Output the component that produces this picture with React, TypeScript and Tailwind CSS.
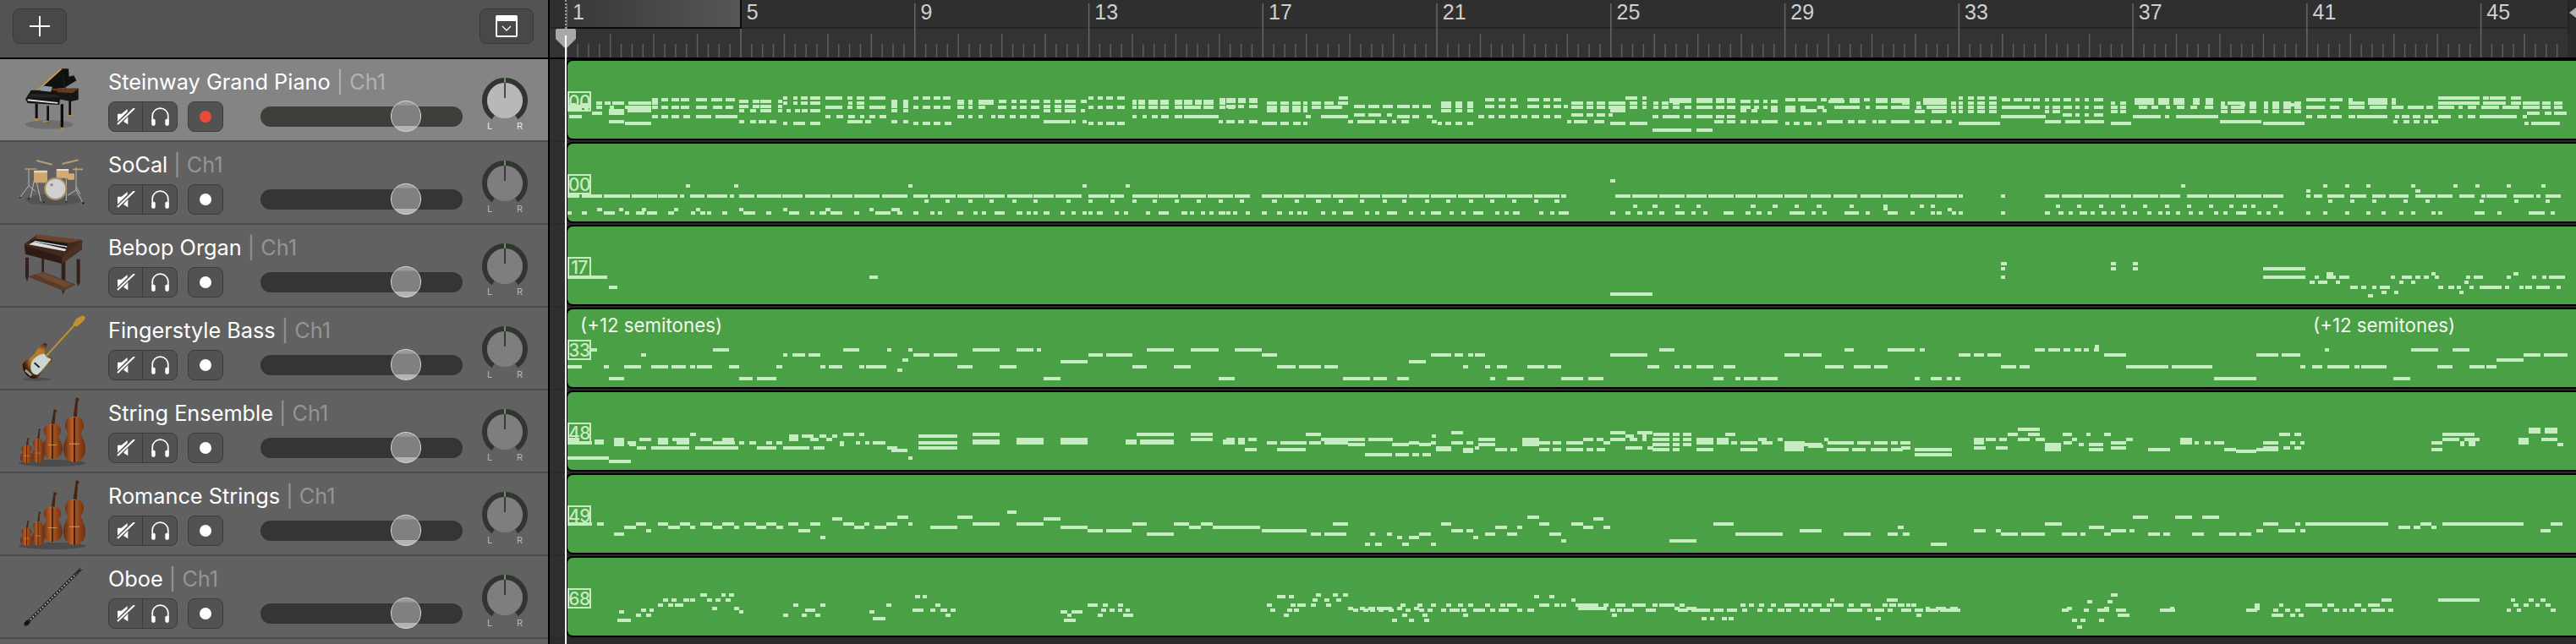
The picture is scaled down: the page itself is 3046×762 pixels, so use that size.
const NOTE_COLOR = "#c6ecc2";

type NoteBlock = { ox: number; oy: number; lines: [number, string][] };

interface Track {
  name: string;
  program: string;
  icon: "piano" | "drums" | "organ" | "bass" | "strings" | "oboe";
  armed?: boolean;
  top: number;
  notes: NoteBlock[];
}

// note rows are read off zoomed crops of the region: x in crop units (1.96/px), y in crop units (3/px)
const TRACKS: Track[] = [
  {
    name: "Steinway Grand Piano",
    program: "00",
    icon: "piano",
    armed: true,
    top: 72,
    notes: [
      {
        ox: 660,
        oy: 0,
        lines: [
          [348, "522-530 545-555 563-578 585-608 620-660 670-682 692-710 722-760 823-835 845-862 870-885 892-910 1228-1240 1250-1262 1270-1285 1295-1312"],
          [354, "218-232 240-255 262-280 285-305 320-345 355-380 388-410 1532-1545 1552-1568"],
          [360, "420-442 450-465 468-494 510-518 772-785 800-812 925-940 950-960 975-1010 1022-1040 1050-1062 1070-1085 1095-1115 1125-1140 1150-1165 1175-1200 1212-1225 1330-1340 1345-1360 1368-1390 1395-1415 1428-1445 1450-1470 1475-1490 1495-1518"],
          [366, "88-102 108-122 125-153 162-215 218-232 522-530 545-555 563-578 585-608 672-682 692-710 772-785 800-812 925-940 950-960 975-1010 1330-1340 1345-1360 1368-1390 1395-1415 1428-1445 1450-1470 1475-1490 1495-1518 1532-1545"],
          [372, "28-42 50-72"],
          [378, "25-75 420-442 450-465 468-494 510-518 772-785 800-812 1125-1140 1150-1165 1175-1200"],
          [382, "88-102 120-130 155-215 218-232 240-255 262-280 285-305 320-345 358-380 388-405 620-660 670-682 692-710 722-760 823-835 845-862 870-885 892-910 925-940 950-960 975-990 1020-1040 1050-1062 1070-1085 1095-1115 1228-1240 1250-1262 1270-1285 1295-1312 1330-1340 1345-1360 1368-1390 1395-1415 1428-1445 1450-1490 1495-1518 1532-1545 1552-1568"],
          [388, "25-55 60-70"],
          [394, "118-153 160-215 420-432 445-458 468-494 510-520 530-540 548-560 565-578 585-608 772-785 800-812 1125-1140 1150-1165 1175-1200 1212-1222"],
          [402, "78-102 118-153"],
          [414, "25-55 218-232 240-255 262-280 290-305 320-355 365-415 620-632 645-660 672-688 700-710 722-735 745-760 925-940 950-960 975-985 1003-1012 1020-1035 1047-1060 1070-1085 1095-1115 1330-1340 1355-1365 1375-1388 1398-1415 1428-1445 1450-1530"],
          [432, "118-153 420-432 445-458 465-482 490-505 670-705 712-725 772-785 800-812 1125-1185 1190-1200 1215-1222 1530-1540 1548-1568"],
          [437, "155-215 522-532 545-572 585-608 823-835 845-862 870-885 895-910 1228-1240 1250-1262 1270-1290 1295-1312"],
        ],
      },
      {
        ox: 1450,
        oy: 0,
        lines: [
          [348, "260-282 925-952 965-975"],
          [354, "0-22 28-45 52-72 600-622 632-648 658-672 698-725 735-750 758-776 1028-1078 1090-1128 1135-1155 1160-1180 1295-1318 1325-1368 1378-1392 1400-1432 1445-1468 1478-1492 1505-1532 1540-1568"],
          [360, "0-22 28-45 52-72 1028-1078 1090-1128 1135-1155 1160-1180 1192-1216 1224-1235 1245-1255 1262-1278 1395-1432 1445-1468 1505-1532 1540-1568"],
          [366, "95-118 125-145 152-172 178-188 198-220 228-250 258-282 498-522 532-548 558-572 800-828 835-850 858-878 885-925 935-952 965-975 990-1002 1010-1025 1035-1050"],
          [378, "0-22 28-42 52-72 296-322 330-355 362-385 396-425 432-448 455-475 498-522 532-548 558-572 600-622 632-648 658-675 698-725 735-750 758-776 782-792"],
          [382, "95-118 125-145 152-172 178-188 198-220 228-270 800-828 835-850 858-878 885-925 935-952 965-975 990-1002 1010-1025 1035-1050 1062-1078 1090-1128 1135-1155 1160-1180 1192-1216 1224-1235 1245-1255 1262-1278 1295-1318 1330-1342 1370-1385 1410-1468 1482-1492 1505-1532 1540-1568"],
          [394, "95-118 125-145 152-172 178-188 498-522 532-548 558-572 890-925 1192-1205 1218-1232 1262-1278 1295-1318 1330-1368 1382-1392"],
          [408, "296-322 330-360 372-384 800-828 835-850 858-878 885-895"],
          [414, "185-196 220-282 396-425 432-448 465-478 585-598 608-622 632-648 658-675 685-698 708-725 735-750 760-776 988-1002 1012-1052 1060-1078 1090-1128 1135-1155 1160-1180"],
          [432, "0-20 28-42 52-72 282-294 304-345 355-372 385-395 405-422 476-488 790-800 806-838 852-875 1130-1152 1160-1180 1192-1205 1215-1232 1240-1278 1392-1430 1440-1455 1465-1482 1498-1505 1512-1530 1540-1568"],
          [437, "82-118 125-145 155-172 178-188 490-498 508-522 532-548 558-572 890-925 935-976 1295-1305 1315-1328 1338-1355 1370-1380"],
          [462, "988-1078 1090-1128"],
        ],
      },
      {
        ox: 2246,
        oy: 0,
        lines: [
          [348, "138-148 158-172 180-198 208-225 1248-1345 1352-1365 1368-1405 1418-1442"],
          [354, "5-22 55-110 238-258 265-285 290-305 310-325 338-345 355-372 380-398 408-418 430-440 450-472 545-590 600-625 635-660 680-695 710-728 942-988 998-1028 1040-1048 1085-1130 1140-1148"],
          [366, "5-22 40-50 55-110 120-132 138-148 158-172 180-198 208-225 490-498 512-525 545-590 600-625 635-660 680-695 710-728 745-752 760-800 812-828 845-855 865-880 890-908 915-930 1040-1078 1085-1130 1140-1148 1248-1345 1352-1405 1418-1442 1445-1485 1490-1510 1518-1538"],
          [372, "745-752 790-802 812-828 845-855 865-880 890-930"],
          [382, "5-22 40-52 62-110 120-132 138-148 158-172 180-198 208-225 238-302 310-325 338-345 355-372 380-400 408-418 430-440 450-472 490-505 512-525 555-575 585-600 618-625 642-660 675-690 708-728 745-760 768-800 812-828 845-855 865-880 890-908 915-930 942-985 998-1020 1040-1078 1090-1130 1140-1168 1178-1215 1222-1238 1248-1285 1295-1305 1318-1338 1348-1390 1398-1438 1445-1485 1490-1510 1518-1538"],
          [396, "35-58 75-110 122-132 138-148 158-172 180-198 208-225 338-345 355-372 490-505 512-525 745-760 768-800 812-828 845-855 865-880 890-908 915-930"],
          [402, "1455-1485 1495-1510 1518-1548"],
          [408, "378-400 408-418 430-440 450-472"],
          [414, "235-338 540-605 615-625 640-738 942-955 968-990 1000-1025 1040-1055 1060-1130 1148-1155 1165-1182 1190-1208 1218-1238 1248-1278 1295-1305 1318-1335 1345-1432 1445-1452"],
          [432, "5-22 35-58 72-98 108-122 338-375 385-420 430-475 742-838 1145-1155 1168-1182 1192-1205 1215-1222 1232-1248"],
          [437, "138-235 490-538 843-940 1448-1458 1465-1532"],
        ],
      },
    ],
  },
  {
    name: "SoCal",
    program: "00",
    icon: "drums",
    top: 170,
    notes: [
      {
        ox: 660,
        oy: 0,
        lines: [
          [660, "295-305 408-418 812-822 1215-1225 1315-1325"],
          [695, "22-50 55-102 105-165 170-228 232-278 283-293 306-340 345-392 397-407 420-455 460-517 520-568 572-630 635-682 686-745 750-808 824-858 862-920 925-985 988-1035 1040-1098 1102-1150 1152-1212 1228-1275 1280-1312 1330-1388 1392-1438 1442-1500 1505-1563"],
          [714, "848-858 898-908 950-960 1000-1010 1052-1062 1102-1112 1178-1188 1228-1238 1280-1290 1330-1340 1378-1388 1428-1438 1480-1490 1530-1540"],
          [744, "90-102 142-152 195-205 268-278 320-330 420-430 522-532 620-632 722-732 772-792"],
          [755, "22-28 55-67 105-130 155-165 180-200 205-228 255-268 308-318 330-342 345-355 380-392 430-458 482-494 535-558 585-595 605-620 632-660 686-698 735-770 785-796 824-835 862-872 880-890 925-938 962-972 982-992 1012-1035 1062-1075 1085-1095 1102-1112 1125-1138 1165-1175 1190-1200 1215-1225 1228-1238 1248-1262 1290-1300 1312-1322 1362-1372 1392-1415 1445-1458 1465-1470 1490-1500 1510-1518 1530-1545"],
        ],
      },
      {
        ox: 1450,
        oy: 0,
        lines: [
          [642, "890-902"],
          [695, "0-16 20-55 82-130 133-180 184-243 247-306 310-357 361-419 423-470 474-533 537-596 600-647 651-710 714-773 777-788 902-937 941-1000 1004-1062 1066-1113 1117-1176 1180-1227 1231-1290 1294-1347 1355-1403 1407-1462 1470-1517 1521-1568"],
          [714, "32-42 106-118 158-168 208-220 260-270 310-320 362-372 408-418 460-470 510-520 562-572 612-622 662-672 714-724 760-772"],
          [732, "942-952 988-1000 1040-1050 1090-1100 1215-1227 1266-1278 1318-1328 1368-1380 1444-1454 1522-1532"],
          [740, "1522-1532"],
          [755, "0-7 15-25 45-55 82-94 118-130 145-155 165-172 178-188 220-230 245-252 270-294 322-330 345-354 372-396 424-434 450-460 474-498 518-528 545-555 572-596 624-634 645-655 665-680 725-735 750-760 770-793 890-902 926-937 953-964 976-988 1004-1015 1040-1062 1078-1088 1105-1113 1152-1176 1203-1215 1228-1240 1255-1265 1305-1340 1356-1365 1382-1392 1432-1465 1482-1492 1533-1556"],
        ],
      },
      {
        ox: 2246,
        oy: 0,
        lines: [
          [660, "652-662 982-992 1032-1042 1082-1092 1185-1195 1283-1293 1334-1344 1408-1418 1487-1497"],
          [678, "942-952 1195-1207"],
          [695, "0-20 25-82 86-133 138-148 236-246 338-372 376-423 427-486 490-537 541-600 604-652 666-713 717-776 780-839 843-890 942-952 960-980 992-1032 1044-1082 1096-1128 1134-1180 1196-1243 1247-1283 1298-1333 1348-1356 1360-1407 1423-1470 1475-1485 1498-1533"],
          [714, "994-1004 1044-1054 1095-1105 1168-1178 1220-1230 1345-1355 1425-1435 1497-1507"],
          [732, "48-58 72-82 362-372 412-422 463-473 514-524 565-575 616-626 667-677 718-728 765-775 795-805 815-825 867-877"],
          [744, "112-122"],
          [755, "25-35 72-82 86-98 122-132 138-148 236-246 338-349 368-380 392-402 418-436 442-451 468-480 490-500 518-528 541-551 575-585 600-610 618-625 640-650 670-680 694-702 730-740 750-760 780-804 830-840 850-860 880-890 942-952 982-992 1032-1042 1082-1092 1118-1128 1158-1168 1185-1195 1233-1243 1248-1258 1333-1356 1385-1395 1458-1495 1510-1520"],
        ],
      },
    ],
  },
  {
    name: "Bebop Organ",
    program: "17",
    icon: "organ",
    top: 268,
    notes: [
      { ox: 660, oy: 270, lines: [[173, "22-114 722-741"], [209, "118-137"]] },
      { ox: 1450, oy: 270, lines: [[233, "890-988"]] },
      {
        ox: 2246,
        oy: 270,
        lines: [
          [125, "236-250 490-502 541-553"],
          [143, "236-246 490-502 541-553 843-941"],
          [161, "990-1005 1232-1242 1423-1435"],
          [173, "236-246 843-941 962-972 990-1012 1020-1043 1138-1148 1165-1188 1196-1207 1215-1226 1240-1250 1313-1323 1330-1352 1408-1418 1467-1477 1490-1500 1505-1542"],
          [191, "950-962 970-992 1012-1022 1158-1168 1185-1195 1310-1320"],
          [209, "1044-1062 1070-1082 1096-1106 1114-1138 1248-1260 1272-1285 1292-1302 1322-1332 1345-1396 1404-1414 1436-1446 1450-1465 1475-1507 1522-1532"],
          [227, "1118-1130 1146-1156 1298-1308"],
          [239, "1086-1098"],
        ],
      },
    ],
  },
  {
    name: "Fingerstyle Bass",
    program: "33",
    icon: "bass",
    top: 366,
    notes: [
      {
        ox: 660,
        oy: 270,
        lines: [
          [432, "75-90 358-396 660-698 762-772 812-822 960-1023 1062-1102 1110-1120 1365-1427 1466-1530"],
          [450, "192-204 522-532 542-572 580-608 824-862 870-925 1228-1262 1270-1330"],
          [468, "797-810"],
          [474, "1165-1227"],
          [492, "22-55 106-118 153-192 216-255 262-295 306-318 322-357 396-420 506-520 608-620 628-660 698-710 714-761 925-960 1023-1062 1330-1364 1427-1466"],
          [503, "785-796"],
          [534, "118-153 420-452 460-506 1125-1165 1530-1568"],
        ],
      },
      {
        ox: 1450,
        oy: 270,
        lines: [
          [432, "20-82 1004-1039 1432-1454 1533-1568"],
          [450, "82-118 474-521 529-549 561-573 577-600 890-976 1294-1329 1337-1380"],
          [474, "423-463"],
          [492, "118-161 169-220 228-259 549-561 600-612 628-651 698-737 745-776 976-1004 1039-1051 1059-1078 1090-1129 1152-1180 1388-1431 1454-1494 1502-1533"],
          [534, "0-20 270-333 341-372 396-423 612-623 651-690 776-827 839-874 1129-1152 1180-1192 1200-1231 1239-1278"],
        ],
      },
      {
        ox: 2246,
        oy: 270,
        lines: [
          [420, "452-462"],
          [432, "0-35 47-59 314-338 345-372 380-396 405-420 428-440 450-462 985-992 1185-1247 1282-1321"],
          [450, "137-165 172-196 204-235 474-525 827-878 886-929 1447-1486 1494-1548"],
          [468, "1384-1446"],
          [492, "235-270 278-302 525-623 631-725 929-941 956-980 992-1043 1055-1066 1070-1129 1247-1282 1321-1356 1360-1384"],
          [534, "35-47 72-98 110-122 130-142 729-827 1145-1184"],
        ],
      },
    ],
  },
  {
    name: "String Ensemble",
    program: "48",
    icon: "strings",
    top: 464,
    notes: [
      {
        ox: 660,
        oy: 270,
        lines: [
          [732, "305-318 660-686 698-710 960-1023 1340-1427 1466-1517"],
          [738, "535-557 565-592 605-620 635-647 835-925"],
          [750, "22-50 130-153 188-215 232-255 265-305 330-358 380-408 535-557 585-605 622-635 1062-1125 1165-1227 1466-1517"],
          [756, "85-106 232-255 380-408 960-1023 1062-1125 1315-1340 1348-1427 1540-1568"],
          [762, "22-78 85-106 130-153 160-180 232-255 275-305 358-408 420-432 442-458 482-495 506-520 652-660 690-700 712-722 730-760 835-925 960-1023 1062-1125 1165-1227 1315-1340 1348-1427 1540-1568"],
          [768, "130-153 165-180 652-660"],
          [780, "182-204 216-305 318-418 460-505 522-583 592-618 835-925 762-785"],
          [790, "772-810"],
          [816, "22-118 812-822"],
          [827, "118-169"],
        ],
      },
      {
        ox: 1450,
        oy: 270,
        lines: [
          [726, "521-549 890-925 953-988"],
          [732, "185-220 990-1027 1035-1051 1059-1078 1157-1180"],
          [738, "925-945 965-975 476-486"],
          [750, "0-20 27-43 51-71 220-322 329-385 584-623 686-725 827-851 859-875 890-925 935-953 965-975 988-1027 1035-1051 1059-1078 1090-1129 1137-1165 1233-1252 1278-1290 1385-1395"],
          [762, "0-20 27-43 94-118 125-185 192-220 228-282 423-447 474-486 521-549 557-573 686-750 757-776 788-827 875-890 1090-1129 1137-1165 1170-1184 1192-1231 1240-1265 1294-1342 1394-1454 1462-1494 1502-1533 1541-1557 1562-1568"],
          [768, "282-322 384-423 447-474 584-623 686-725 988-1027 1035-1051 1059-1078 1294-1380"],
          [775, "1294-1340 1348-1384"],
          [780, "577-584 486-521 925-965 976-990"],
          [786, "43-71 118-184 486-521 549-573 623-651 659-675 725-749 757-776 788-827 835-851 859-878 988-1027 1035-1051 1090-1129 1192-1231 1294-1340 1392-1443 1451-1482 1494-1533 1541-1568"],
          [792, "549-573"],
          [804, "322-384 392-423 431-447 455-474"],
        ],
      },
      {
        ox: 2246,
        oy: 270,
        lines: [
          [714, "275-325 1458-1485 1495-1525"],
          [722, "1458-1485 1495-1525"],
          [732, "251-274 298-325 378-400 433-440 474-490 880-905 915-930 1258-1333"],
          [750, "172-196 200-224 232-250 275-302 315-337 400-412 525-541 650-678 1258-1298 1310-1345 1435-1458 1487-1525"],
          [756, "1435-1458 650-678"],
          [762, "3-24 490-525 172-196 380-400 650-678 685-695 708-722 730-753 843-878 905-917 930-940 1232-1258 1300-1310 1320-1335 1435-1458"],
          [768, "338-376 415-427 440-474 1300-1310 1320-1335 1525-1538"],
          [780, "3-24 172-200 224-251 338-376 490-525 843-878 890-905 915-930"],
          [786, "35-122 338-376 440-474 576-627 753-765 765-780 827-843 843-878 1232-1258"],
          [792, "780-827"],
          [804, "35-122"],
        ],
      },
    ],
  },
  {
    name: "Romance Strings",
    program: "49",
    icon: "strings",
    top: 562,
    notes: [
      {
        ox: 660,
        oy: 270,
        lines: [
          [1008, "1040-1062"],
          [1026, "785-810 925-960"],
          [1032, "635-659 1125-1165"],
          [1050, "22-78 90-106 180-204 231-255 282-306 330-358 380-408 431-458 482-506 533-557 584-608 660-686 710-721 760-785 812-822 960-1023 1062-1125 1330-1364 1427-1462 1490-1517"],
          [1062, "153-180 255-282 306-318 358-380 408-419 458-482 506-521 686-710 733-760 862-925 1165-1227 1462-1490 1517-1568"],
          [1074, "204-216 557-584 1227-1262 1270-1329"],
          [1086, "130-153 1364-1427"],
          [1098, "608-619"],
        ],
      },
      {
        ox: 1450,
        oy: 270,
        lines: [
          [1026, "698-725"],
          [1032, "851-875"],
          [1050, "247-282 498-521 725-749 800-827 1129-1176"],
          [1062, "0-78 623-651 675-686 827-851 875-890 1556-1568"],
          [1074, "82-185 521-549 557-573 1329-1380"],
          [1086, "196-220 227-278 333-345 372-384 447-474 600-623 651-675 749-776 1180-1290 1431-1494 1533-1557"],
          [1098, "396-408 423-447 572-584"],
          [1110, "776-788 1027-1090"],
          [1122, "321-333 345-360 408-423 474-486"],
        ],
      },
      {
        ox: 2246,
        oy: 270,
        lines: [
          [1026, "541-576 639-678 702-741"],
          [1050, "337-376 843-878 917-929 941-1133 1207-1232 1258-1446 1510-1537"],
          [1062, "0-8 439-474 1156-1184 1192-1207 1232-1243"],
          [1074, "172-200 224-235 490-525 533-545 827-843 878-917 929-941 1486-1510"],
          [1086, "8-24 235-274 282-337 376-412 420-431 474-490 576-604 612-627 678-706 741-780 788-815"],
          [1122, "72-110"],
        ],
      },
    ],
  },
  {
    name: "Oboe",
    program: "68",
    icon: "oboe",
    top: 660,
    notes: [
      {
        ox: 660,
        oy: 270,
        lines: [
          [1302, "330-345 378-388 396-408"],
          [1308, "828-840 845-855"],
          [1320, "243-255 262-274 290-303 306-318 345-357 365-376 388-400"],
          [1338, "232-243 255-267 270-290 545-557 608-619 760-772 875-886 1227-1250 1262-1274 1298-1309"],
          [1350, "357-368 408-420"],
          [1356, "192-203 212-222 572-596 822-847 862-874 886-902 910-921 1258-1270 1278-1290 1298-1302 1315-1325"],
          [1362, "141-153 420-427 722-733 1165-1180 1190-1215"],
          [1374, "180-192 204-216 522-533 565-576 596-608 898-909 1180-1190 1250-1262 1309-1333"],
          [1386, "730-760"],
          [1392, "137-169 1172-1200"],
        ],
      },
      {
        ox: 1450,
        oy: 270,
        lines: [
          [1302, "208-220 247-258 270-282"],
          [1308, "118-137 145-157 714-725 749-761"],
          [1320, "200-212 227-239 255-267 800-810 1400-1410 1530-1556"],
          [1338, "94-106 149-161 165-184 196-208 231-243 404-416 443-455 474-486 510-521 537-549 561-573 600-612 635-647 651-675 725-749 760-772 776-788 810-862 875-886 902-925 941-972 988-1000 1004-1039 1051-1062 1192-1204 1211-1223 1235-1247 1262-1274 1294-1329 1337-1349 1356-1380 1392-1404 1408-1432 1443-1455 1470-1494 1521-1533 1537-1552 1556-1568"],
          [1350, "282-294 310-322 330-345 349-384 396-408 435-447 815-882 1039-1051 1066-1090"],
          [1356, "102-114 141-153 157-169 294-306 318-330 333-345 353-365 376-388 416-427 447-459 467-478 498-510 518-541 545-557 573-584 584-600 612-623 631-655 675-686 698-714 890-902 906-917 921-945 972-996 1047-1070 1078-1121 1129-1153 1160-1184 1196-1208 1231-1243 1255-1267 1278-1294 1298-1310 1329-1341 1349-1360 1376-1400 1439-1474 1486-1498 1502-1525 1533-1545 1564-1568"],
          [1374, "133-145 408-420 455-467 549-561 894-906"],
          [1386, "1102-1114 1121-1129 1149-1160 1164-1176 1506-1517"],
          [1392, "384-396 423-435 459-470"],
        ],
      },
      {
        ox: 2246,
        oy: 270,
        lines: [
          [1302, "490-505"],
          [1320, "1118-1141 1248-1345 1418-1426 1459-1470 1486-1497"],
          [1326, "435-447 482-494"],
          [1338, "0-12 16-24 27-39 823-835 880-886 941-980 992-1008 1055-1070 1086-1113 1423-1435 1447-1458 1474-1482 1498-1510"],
          [1350, "60-70 85-108 118-135 388-400 474-486 627-635 823-835"],
          [1356, "5-27 35-55 60-90 95-142 376-392 427-439 459-486 502-525 604-639 804-815 815-828 866-878 894-905 917-929 980-992 1008-1020 1027-1035 1043-1055 1070-1082 1094-1125 1133-1145 1408-1418 1430-1438 1510-1521"],
          [1374, "39-51 506-533 862-890 905-917 925-937"],
          [1392, "400-412 419-431 462-474"],
          [1416, "412-423"],
        ],
      },
    ],
  },
];

const REGION_LEFT = 671;
const REGION_WIDTH = 2365;
const REGION_HEIGHT = 92;

function noteRects(track: Track) {
  const rects: { x: number; y: number; w: number }[] = [];
  for (const block of track.notes) {
    for (const [yz, spans] of block.lines) {
      for (const span of spans.split(" ")) {
        const [a, b] = span.split("-").map(Number);
        rects.push({
          x: Math.round(block.ox + a / 1.96 - REGION_LEFT),
          y: Math.round(block.oy + yz / 3 - 2 - track.top),
          w: Math.max(5, Math.round((b - a) / 1.96)),
        });
      }
    }
  }
  return rects;
}

function MuteIcon() {
  return (
    <svg width="22" height="20" viewBox="0 0 66 60" fill="#fff">
      <path d="M3 20H17L38 3V13L3 47Z" />
      <path d="M40 30V58L24 47Z" />
      <path d="M63 0L3 57" stroke="#fff" strokeWidth="6" />
    </svg>
  );
}

function HeadphonesIcon() {
  return (
    <svg width="23" height="22" viewBox="0 0 66 64" fill="none" stroke="#fff">
      <path d="M6 48V30A27 27 0 0 1 60 30V48" strokeWidth="5" />
      <rect x="3" y="40" width="13" height="23" rx="5" fill="#fff" stroke="none" />
      <rect x="50" y="40" width="13" height="23" rx="5" fill="#fff" stroke="none" />
    </svg>
  );
}

function PianoArt() {
  return (
    <svg width="110" height="96" viewBox="30 30 330 288">
      <ellipse cx="175" cy="262" rx="85" ry="16" fill="#000" opacity="0.16" />
      <path d="M125 248h9V188h-9zM166 256h8V196h-8zM215 280h10V190h-10zM244 236h8V176h-8z" fill="#0d0d0d" />
      <path d="M123 240h12v9h-12zM152 248h22v6h-22zM214 272h12v11h-12zM242 228h11v8h-11z" fill="#b08b3e" />
      <path d="M130 142L214 64 243 64 245 92 262 88 271 106 228 132Z" fill="#101010" />
      <path d="M128 142L214 62 220 66 136 142Z" fill="#c89a45" />
      <path d="M222 86L233 140" stroke="#222" strokeWidth="3" />
      <path d="M180 134H278V174L252 180 200 170Z" fill="#161616" />
      <path d="M180 134H278L258 150 196 148Z" fill="#6c3716" />
      <path d="M110 140L200 142 215 162 210 192 98 186 90 172Z" fill="#141414" />
      <path d="M146 124L186 128 180 146 140 142Z" fill="#8c98a4" />
      <path d="M98 172L205 183 205 188 98 178Z" fill="#dcdcdc" />
      <path d="M112 152L200 156 212 166 98 166Z" fill="#242424" />
    </svg>
  );
}

function DrumsArt() {
  const legs = "M42 195L72 155V95M72 155L95 175M115 210L95 120 78 198M205 210V125M265 218L240 170V90M240 170L210 190M255 185L240 160";
  return (
    <svg width="110" height="96" viewBox="0 0 330 288">
      <ellipse cx="160" cy="205" rx="100" ry="20" fill="#000" opacity="0.14" />
      <path d={legs} stroke="#b8b8b0" strokeWidth="3" fill="none" />
      <path d="M100 66L155 80" stroke="#b59f6e" strokeWidth="6" />
      <path d="M190 78L248 64" stroke="#b59f6e" strokeWidth="6" />
      <path d="M58 96H100M228 97H264" stroke="#b59f6e" strokeWidth="5" />
      <rect x="90" y="103" width="48" height="42" rx="4" fill="#cfa56b" />
      <rect x="90" y="101" width="48" height="8" rx="3" fill="#d8d8d0" />
      <rect x="170" y="98" width="44" height="30" rx="3" fill="#d2ab76" />
      <rect x="170" y="96" width="44" height="6" rx="3" fill="#dfdfd7" />
      <rect x="210" y="112" width="24" height="22" rx="3" fill="#d2ab76" />
      <circle cx="167" cy="166" r="38" fill="#d0d0d0" stroke="#a98a5c" strokeWidth="6" />
      <circle cx="153" cy="152" r="5" fill="#8a8a8a" />
      <circle cx="42" cy="197" r="3" fill="#222" />
      <circle cx="72" cy="201" r="3" fill="#222" />
      <circle cx="126" cy="214" r="3" fill="#222" />
      <circle cx="205" cy="212" r="3" fill="#222" />
      <circle cx="265" cy="217" r="4" fill="#222" />
    </svg>
  );
}

function OrganArt() {
  return (
    <svg width="110" height="96" viewBox="0 294 330 288">
      <path d="M60 410H72V478L66 496 60 478ZM188 420H202V520L194 542 188 520ZM242 416H254V498L248 512 242 498ZM118 405H126V462H118Z" fill="#33211a" />
      <path d="M68 478L124 462 240 506 194 528Z" fill="#5a3a28" />
      <path d="M98 472L124 466 226 504 200 516Z" fill="#6e4a32" />
      <path d="M56 362L100 330 262 348 260 382 190 432 60 394Z" fill="#40281c" />
      <path d="M58 368L190 408 190 432 60 398Z" fill="#2e1c14" />
      <path d="M190 408L262 348 260 382 190 432Z" fill="#4c3022" />
      <path d="M100 328L262 348 218 358 96 344Z" fill="#6a442e" />
      <path d="M76 356L100 344 212 362 204 384Z" fill="#141414" />
      <path d="M72 364L90 354 206 380 200 388Z" fill="#dcdcdc" />
      <path d="M92 352L208 372" stroke="#d8d8d8" strokeWidth="4" />
    </svg>
  );
}

function BassArt() {
  return (
    <svg width="110" height="96" viewBox="0 588 330 288">
      <defs>
        <radialGradient id="sunburst" cx="0.55" cy="0.45" r="0.6">
          <stop offset="0.45" stopColor="#b87a2a" />
          <stop offset="0.8" stopColor="#4a2610" />
          <stop offset="1" stopColor="#15100c" />
        </radialGradient>
      </defs>
      <ellipse cx="100" cy="842" rx="50" ry="6" fill="#000" opacity="0.2" />
      <path d="M128 766L234 650" stroke="#bf9232" strokeWidth="6" />
      <path d="M228 650L240 628 262 616 273 622 268 634 242 656Z" fill="#bf9232" />
      <path d="M50 790C56 772 80 770 92 752 104 730 126 708 136 716 140 726 122 750 128 768L146 762C158 768 158 776 146 786 124 800 120 824 100 838 76 846 50 822 50 790Z" fill="url(#sunburst)" />
      <path d="M84 778C96 762 118 748 130 754 128 766 150 768 152 772 132 792 116 816 104 826 86 830 70 808 84 778Z" fill="#c9d6d4" />
      <path d="M62 806L84 826 78 832 58 814Z" fill="#9aa09a" />
      <path d="M92 784L110 800" stroke="#222" strokeWidth="6" />
    </svg>
  );
}

function Violin({ x, y, w, h }: { x: number; y: number; w: number; h: number }) {
  return (
    <svg x={x} y={y} width={w} height={h} viewBox="0 0 40 130" preserveAspectRatio="none">
      <path d="M23 0L29 3 26 10 24 44H17Z" fill="#4a2412" />
      <path d="M20 38C30 38 37 44 37 56 37 64 32 68 32 72 33 78 40 86 40 102 40 120 30 128 20 128 10 128 0 120 0 102 0 86 7 78 8 72 8 68 3 64 3 56 3 44 10 38 20 38Z" fill="url(#violinBody)" />
      <path d="M20 40V128" stroke="#2a140a" strokeWidth="2.5" />
      <path d="M11 92h18" stroke="#d8a860" strokeWidth="1.5" />
    </svg>
  );
}

function StringsArt() {
  return (
    <svg width="110" height="96" viewBox="0 0 110 96">
      <defs>
        <linearGradient id="violinBody" x1="0" y1="0" x2="1" y2="0">
          <stop offset="0" stopColor="#5e2a10" />
          <stop offset="0.4" stopColor="#b85e28" />
          <stop offset="1" stopColor="#6a2e10" />
        </linearGradient>
      </defs>
      <ellipse cx="52" cy="86" rx="40" ry="4" fill="#000" opacity="0.22" />
      <Violin x={65} y={8} w={26} h={78} />
      <Violin x={40} y={22} w={24} h={60} />
      <Violin x={28} y={45} w={14} h={41} />
      <Violin x={14} y={56} w={15} h={30} />
    </svg>
  );
}

function OboeArt() {
  return (
    <svg width="110" height="96" viewBox="0 0 110 96">
      <path d="M20 81L85 16" stroke="#2b2b2b" strokeWidth="3.5" strokeLinecap="round" />
      <path d="M20 81L24 77" stroke="#151515" strokeWidth="5" />
      <path d="M26 75L80 21" stroke="#cfcfcf" strokeWidth="1.5" strokeDasharray="1.5 2.5" />
      <path d="M85 16L88 13" stroke="#8a7a5a" strokeWidth="1" />
    </svg>
  );
}

function InstrumentArt({ icon }: { icon: Track["icon"] }) {
  if (icon === "piano") return <PianoArt />;
  if (icon === "drums") return <DrumsArt />;
  if (icon === "organ") return <OrganArt />;
  if (icon === "bass") return <BassArt />;
  if (icon === "strings") return <StringsArt />;
  return <OboeArt />;
}

function PanKnob({ armed }: { armed?: boolean }) {
  return (
    <div className="ml-[23px] flex w-[54px] flex-col pt-[22px]">
      <svg width="54" height="52" viewBox="0 0 54 52">
        <path d="M13.2 46.7A24 24 0 1 1 40.8 46.7" fill="none" stroke="#333" strokeWidth="6" />
        <circle cx="27" cy="27" r="21" fill={armed ? "#b8b8b8" : "#7e7e7e"} />
        <path d="M27 6V24" stroke="#262626" strokeWidth="1.5" />
        <path d="M27 0V6" stroke="#62c654" strokeWidth="1.5" />
      </svg>
      <div className={`-mt-[1px] flex justify-between px-[6px] text-[11px] leading-[12px] ${armed ? "text-[#e4e4e4]" : "text-[#b4b4b4]"}`}>
        <span>L</span>
        <span>R</span>
      </div>
    </div>
  );
}

function TrackHeader({ track }: { track: Track }) {
  const armed = track.armed;
  return (
    <div className={`flex h-[98px] border-b-2 border-[#4b4b4b] ${armed ? "bg-[#848484]" : "bg-[#616161]"}`}>
      <div className="w-[128px] shrink-0 pl-[10px]">
        <InstrumentArt icon={track.icon} />
      </div>
      <div className="flex w-[419px] shrink-0 flex-col">
        <div className="mt-[10px] h-[34px] whitespace-nowrap text-[25.3px] leading-[34px] text-white">
          {track.name}
          <span className={armed ? "text-[#b2b2b2]" : "text-[#949494]"}> | Ch1</span>
        </div>
        <div className="mt-[6px] flex h-[36px] items-center">
          <div className="flex h-[36px] w-[82px] overflow-hidden rounded-[8px] border border-[#3c3c3c] bg-[#525252]">
            <div className="flex w-[40px] items-center justify-center border-r border-[#3c3c3c]">
              <MuteIcon />
            </div>
            <div className="flex flex-1 items-center justify-center">
              <HeadphonesIcon />
            </div>
          </div>
          <div className="ml-[12px] flex h-[36px] w-[42px] items-center justify-center rounded-[8px] border border-[#3c3c3c] bg-[#525252]">
            <div className={`h-[14px] w-[14px] rounded-full ${armed ? "bg-[#ec4a3c]" : "bg-white"}`} />
          </div>
          <div className={`relative ml-[44px] h-[24px] w-[239px] rounded-full ${armed ? "bg-[#3e3f3b]" : "bg-[#343633]"}`}>
            <div className="absolute left-[154px] top-[-7px] h-[37px] w-[36px] rounded-full border border-[#d8d8d8] bg-[linear-gradient(#9a9a9a_0,#9a9a9a_12%,#808080_14%,#808080_82%,#b4b4b4_84%)]" />
          </div>
        </div>
      </div>
      <PanKnob armed={armed} />
    </div>
  );
}

function Ruler() {
  const ticks = [];
  for (let i = 0; i < 48 * 4; i++) {
    const x = 19.5 + (51.44 / 4) * i;
    if (x > 2384) break;
    if (i % 16 === 0) ticks.push(<rect key={i} x={x} y={4} width={1.5} height={64} fill="#666" />);
    else if (i % 4 === 0) ticks.push(<rect key={i} x={x} y={40} width={1.5} height={28} fill="#5e5e5e" />);
    else ticks.push(<rect key={i} x={x} y={52} width={1.5} height={16} fill="#5e5e5e" />);
  }
  const bars = [1, 5, 9, 13, 17, 21, 25, 29, 33, 37, 41, 45];
  return (
    <div className="relative h-[68px] bg-[#333333]">
      <div className="flex h-[34px] border-b-2 border-[#252525] bg-[#2f2f2f] pl-[21px]">
        {bars.map((bar) => (
          <div
            key={bar}
            className={`h-[32px] w-[205.75px] shrink-0 pl-[6px] font-['Liberation_Sans',sans-serif] text-[25px] leading-[29px] text-[#cfcfcf] ${
              bar === 1 ? "bg-gradient-to-r from-[#383838] to-[#575757]" : ""
            }`}
          >
            {bar}
          </div>
        ))}
      </div>
      <svg className="absolute left-0 top-0" width="2396" height="68">
        {ticks}
        <rect x="225" y="0" width="2" height="34" fill="#0c0c0c" />
        <rect x="21" y="32" width="206" height="2" fill="#0c0c0c" />
        <rect x="2386" y="0" width="10" height="68" fill="#2b2b2b" />
        <rect x="2386" y="0" width="2" height="40" fill="#232323" />
        <path d="M2388 15L2396 9V21Z" fill="#b0b0b0" />
      </svg>
    </div>
  );
}

function Lane({ track }: { track: Track }) {
  return (
    <div className="h-[98px] border-b-2 border-[#2a2a2a] bg-[#2f2f2f] pl-[21px] pr-[10px] pt-[2px]">
      <div className="relative h-[92px] overflow-hidden rounded-[6px] bg-[#4aa044] shadow-[0_0_0_2px_#000]">
        <div className="absolute left-0 top-[36px] flex h-[24px] w-[28px] items-center justify-center border-2 border-[#c6ecc2] text-[21px] font-medium leading-none tracking-[-0.5px] text-[#c6ecc2]">
          {track.program}
        </div>
        <svg className="absolute left-0 top-0" width={REGION_WIDTH} height={REGION_HEIGHT} shapeRendering="crispEdges">
          {noteRects(track).map((n, i) => (
            <rect key={i} x={n.x} y={n.y} width={n.w} height={4} fill={NOTE_COLOR} />
          ))}
        </svg>
        {track.name === "Fingerstyle Bass" && (
          <>
            <span className="absolute left-[15px] top-[7px] whitespace-nowrap text-[22.3px] leading-[24px] text-[#f2f8f0]">(+12 semitones)</span>
            <span className="absolute left-[2064px] top-[7px] whitespace-nowrap text-[22.3px] leading-[24px] text-[#f2f8f0]">(+12 semitones)</span>
          </>
        )}
      </div>
    </div>
  );
}

function Playhead() {
  return (
    <div className="absolute left-[7px] top-0 w-[24px]">
      <div className="ml-[11px] h-[34px] w-[2px] border-l-2 border-dotted border-[#9a9a9a]" />
      <svg width="24" height="24" className="block">
        <path d="M2 0H22Q24 0 24 2V12L12 24 0 12V2Q0 0 2 0Z" fill="#a8a8a8" />
        <rect x="11" y="8" width="2" height="16" fill="#fff" />
      </svg>
      <div className="ml-[11px] h-[704px] w-[2px] bg-white" />
    </div>
  );
}

export default function App() {
  return (
    <div className="flex h-[762px] w-[3046px] overflow-hidden bg-black font-[Inter,sans-serif]">
      <div className="w-[648px] shrink-0 bg-[#616161]">
        <div className="flex h-[70px] items-start justify-between border-b-2 border-black bg-[#535353] pl-[15px] pr-[17px] pt-[10px]">
          <button className="flex h-[42px] w-[64px] items-center justify-center rounded-[8px] border border-[#383838] bg-[#484848]">
            <svg width="26" height="26" viewBox="0 0 26 26" stroke="#fff" strokeWidth="2">
              <path d="M13 1V25M1 13H25" />
            </svg>
          </button>
          <button className="flex h-[42px] w-[64px] items-center justify-center rounded-[8px] border border-[#383838] bg-[#484848]">
            <svg width="26" height="26" viewBox="0 0 26 26" fill="none">
              <rect x="1" y="1" width="24" height="24" rx="1" stroke="#fff" strokeWidth="2" />
              <rect x="1" y="1" width="24" height="6" fill="#fff" />
              <path d="M8 13L13 18 18 13" stroke="#fff" strokeWidth="1.3" />
            </svg>
          </button>
        </div>
        {TRACKS.map((track) => (
          <TrackHeader key={track.name} track={track} />
        ))}
      </div>
      <div className="relative ml-[2px] flex-1">
        <Ruler />
        <div className="h-[2px] bg-black" />
        {TRACKS.map((track) => (
          <Lane key={track.name} track={track} />
        ))}
        <div className="h-[8px] bg-[#2c2c2c]" />
        <Playhead />
      </div>
    </div>
  );
}
